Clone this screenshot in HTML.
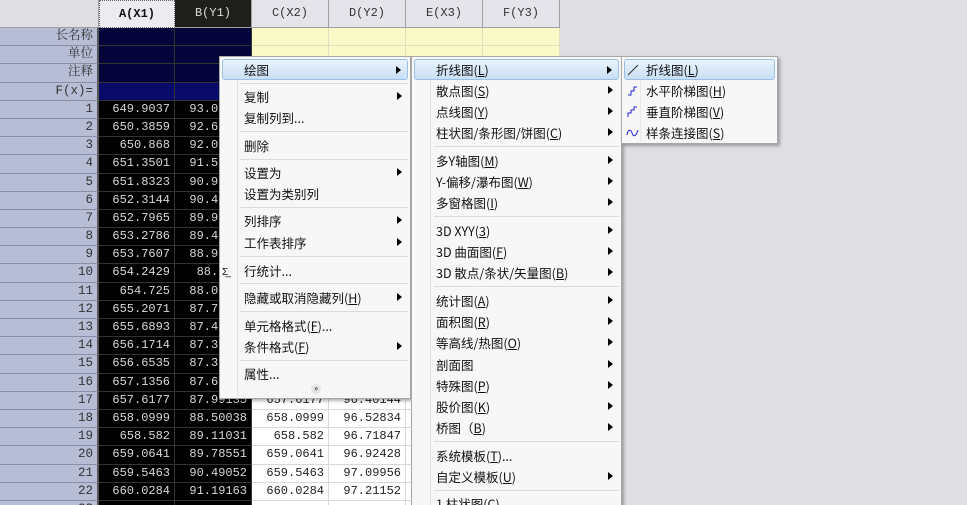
<!DOCTYPE html>
<html><head><meta charset="utf-8"><style>
*{margin:0;padding:0;box-sizing:border-box}
html,body{width:967px;height:505px;overflow:hidden}
body{background:#dfdee3;position:relative;font-family:"Liberation Mono","Noto Serif CJK SC",monospace}
#grid{position:absolute;left:0;top:0;width:560px}
.hdr{height:28px;display:flex;background:#dfdee3}
.hdr div{border-right:1px solid #a0a0a0;border-bottom:1px solid #a0a0a0;text-align:center;line-height:27px;font-size:12px;color:#333;font-family:"Liberation Mono","Noto Serif CJK SC",monospace;background:#e4e4ea}
.hdr .c0{background:#dfdee3}
.hdr .sa{background:#ececf0;font-weight:bold;color:#111;border:1px dotted #666}
.hdr .sb{background:#1e1e1a;color:#ddd}
.r{height:18.2px;display:flex;overflow:hidden}
.r div{height:18.2px;border-right:1px solid #c8c8c8;border-bottom:1px solid #c8c8c8;text-align:right;padding-right:4px;font-size:12px;line-height:17px;white-space:nowrap;overflow:hidden;color:#222}
.r .h{background:#b8bdd6;border-right:2px solid #555;border-bottom:1px solid #8a8fa8;color:#333;font-family:"Liberation Mono","Noto Serif CJK SC",monospace;font-size:12.5px}
.w0{width:99px}.w1{width:76px}.w2{width:77px}
.r .n{background:#04043a;border-color:#333}
.r .k{background:#000;color:#d8d8d8;border-color:#333}
.r .y{background:#fafac8;border-color:#e0e0c0}
.r .wh{background:#fff;border-color:#d8d8d8}
.menu{position:absolute;background:#f7f7f7;border:1px solid #a8a8a8;box-shadow:2px 2px 3px rgba(0,0,0,.3);font-family:"Noto Sans CJK SC","Liberation Sans",sans-serif;font-size:12.5px;color:#111}
.menu .gut{position:absolute;top:2px;bottom:2px;width:1px;background:#e2e2e2}
.it{position:absolute;left:2px;right:2px;height:21px;line-height:21px}
.it.hl{background:linear-gradient(#eaf3fc,#c8dff5);border:1px solid #9cc0e6;border-radius:3px;line-height:19px}
.it .arr{position:absolute;right:6px;top:6px;width:0;height:0;border-left:5px solid #000;border-top:4.5px solid transparent;border-bottom:4.5px solid transparent}
.sep{position:absolute;height:1px;background:#dcdcdc}
</style></head><body>
<div id="grid">
<div class="hdr"><div class="c0" style="width:99px"></div><div class="sa" style="width:76px">A(X1)</div><div class="sb" style="width:77px">B(Y1)</div><div style="width:77px">C(X2)</div><div style="width:77px">D(Y2)</div><div style="width:77px">E(X3)</div><div style="width:77px">F(Y3)</div></div>
<div class="r"><div class="h w0">长名称</div><div class="n w1"></div><div class="n w2"></div><div class="y w2"></div><div class="y w2"></div><div class="y w2"></div><div class="y w2"></div></div>
<div class="r"><div class="h w0">单位</div><div class="n w1"></div><div class="n w2"></div><div class="y w2"></div><div class="y w2"></div><div class="y w2"></div><div class="y w2"></div></div>
<div class="r"><div class="h w0">注释</div><div class="n w1"></div><div class="n w2"></div><div class="y w2"></div><div class="y w2"></div><div class="y w2"></div><div class="y w2"></div></div>
<div class="r"><div class="h w0">F(x)=</div><div class="n w1" style="background:#0a0a6a"></div><div class="n w2" style="background:#0a0a6a"></div><div class="wh w2"></div><div class="wh w2"></div><div class="wh w2"></div><div class="wh w2"></div></div>
<div class="r"><div class="h w0">1</div><div class="k w1">649.9037</div><div class="k w2">93.01234</div><div class="wh w2"></div><div class="wh w2"></div><div class="wh w2"></div><div class="wh w2"></div></div>
<div class="r"><div class="h w0">2</div><div class="k w1">650.3859</div><div class="k w2">92.61234</div><div class="wh w2"></div><div class="wh w2"></div><div class="wh w2"></div><div class="wh w2"></div></div>
<div class="r"><div class="h w0">3</div><div class="k w1">650.868</div><div class="k w2">92.01234</div><div class="wh w2"></div><div class="wh w2"></div><div class="wh w2"></div><div class="wh w2"></div></div>
<div class="r"><div class="h w0">4</div><div class="k w1">651.3501</div><div class="k w2">91.51234</div><div class="wh w2"></div><div class="wh w2"></div><div class="wh w2"></div><div class="wh w2"></div></div>
<div class="r"><div class="h w0">5</div><div class="k w1">651.8323</div><div class="k w2">90.91234</div><div class="wh w2"></div><div class="wh w2"></div><div class="wh w2"></div><div class="wh w2"></div></div>
<div class="r"><div class="h w0">6</div><div class="k w1">652.3144</div><div class="k w2">90.41234</div><div class="wh w2"></div><div class="wh w2"></div><div class="wh w2"></div><div class="wh w2"></div></div>
<div class="r"><div class="h w0">7</div><div class="k w1">652.7965</div><div class="k w2">89.91234</div><div class="wh w2"></div><div class="wh w2"></div><div class="wh w2"></div><div class="wh w2"></div></div>
<div class="r"><div class="h w0">8</div><div class="k w1">653.2786</div><div class="k w2">89.41234</div><div class="wh w2"></div><div class="wh w2"></div><div class="wh w2"></div><div class="wh w2"></div></div>
<div class="r"><div class="h w0">9</div><div class="k w1">653.7607</div><div class="k w2">88.91234</div><div class="wh w2"></div><div class="wh w2"></div><div class="wh w2"></div><div class="wh w2"></div></div>
<div class="r"><div class="h w0">10</div><div class="k w1">654.2429</div><div class="k w2">&nbsp;88.1234</div><div class="wh w2"></div><div class="wh w2"></div><div class="wh w2"></div><div class="wh w2"></div></div>
<div class="r"><div class="h w0">11</div><div class="k w1">654.725</div><div class="k w2">88.01234</div><div class="wh w2"></div><div class="wh w2"></div><div class="wh w2"></div><div class="wh w2"></div></div>
<div class="r"><div class="h w0">12</div><div class="k w1">655.2071</div><div class="k w2">87.71234</div><div class="wh w2"></div><div class="wh w2"></div><div class="wh w2"></div><div class="wh w2"></div></div>
<div class="r"><div class="h w0">13</div><div class="k w1">655.6893</div><div class="k w2">87.41234</div><div class="wh w2"></div><div class="wh w2"></div><div class="wh w2"></div><div class="wh w2"></div></div>
<div class="r"><div class="h w0">14</div><div class="k w1">656.1714</div><div class="k w2">87.31234</div><div class="wh w2"></div><div class="wh w2"></div><div class="wh w2"></div><div class="wh w2"></div></div>
<div class="r"><div class="h w0">15</div><div class="k w1">656.6535</div><div class="k w2">87.31234</div><div class="wh w2"></div><div class="wh w2"></div><div class="wh w2"></div><div class="wh w2"></div></div>
<div class="r"><div class="h w0">16</div><div class="k w1">657.1356</div><div class="k w2">87.61234</div><div class="wh w2"></div><div class="wh w2"></div><div class="wh w2"></div><div class="wh w2"></div></div>
<div class="r"><div class="h w0">17</div><div class="k w1">657.6177</div><div class="k w2">87.99135</div><div class="wh w2">657.6177</div><div class="wh w2">96.40144</div><div class="wh w2"></div><div class="wh w2"></div></div>
<div class="r"><div class="h w0">18</div><div class="k w1">658.0999</div><div class="k w2">88.50038</div><div class="wh w2">658.0999</div><div class="wh w2">96.52834</div><div class="wh w2"></div><div class="wh w2"></div></div>
<div class="r"><div class="h w0">19</div><div class="k w1">658.582</div><div class="k w2">89.11031</div><div class="wh w2">658.582</div><div class="wh w2">96.71847</div><div class="wh w2"></div><div class="wh w2"></div></div>
<div class="r"><div class="h w0">20</div><div class="k w1">659.0641</div><div class="k w2">89.78551</div><div class="wh w2">659.0641</div><div class="wh w2">96.92428</div><div class="wh w2"></div><div class="wh w2"></div></div>
<div class="r"><div class="h w0">21</div><div class="k w1">659.5463</div><div class="k w2">90.49052</div><div class="wh w2">659.5463</div><div class="wh w2">97.09956</div><div class="wh w2"></div><div class="wh w2"></div></div>
<div class="r"><div class="h w0">22</div><div class="k w1">660.0284</div><div class="k w2">91.19163</div><div class="wh w2">660.0284</div><div class="wh w2">97.21152</div><div class="wh w2"></div><div class="wh w2"></div></div>
<div class="r"><div class="h w0">23</div><div class="k w1"></div><div class="k w2"></div><div class="wh w2"></div><div class="wh w2"></div><div class="wh w2"></div><div class="wh w2"></div></div>
</div>

<!-- menu 1 -->
<div class="menu" style="left:219px;top:56px;width:192px;height:343px">
<div class="gut" style="left:17px"></div>
<div class="it hl" style="top:2px"><span style="position:absolute;left:21px">绘图</span><i class="arr"></i></div>
<div class="sep" style="left:20px;right:2px;top:26px"></div>
<div class="it" style="top:29px"><span style="position:absolute;left:22px">复制</span><i class="arr"></i></div>
<div class="it" style="top:50px"><span style="position:absolute;left:22px">复制列到...</span></div>
<div class="sep" style="left:20px;right:2px;top:74px"></div>
<div class="it" style="top:78px"><span style="position:absolute;left:22px">删除</span></div>
<div class="sep" style="left:20px;right:2px;top:102px"></div>
<div class="it" style="top:105px"><span style="position:absolute;left:22px">设置为</span><i class="arr"></i></div>
<div class="it" style="top:126px"><span style="position:absolute;left:22px">设置为类别列</span></div>
<div class="sep" style="left:20px;right:2px;top:150px"></div>
<div class="it" style="top:153px"><span style="position:absolute;left:22px">列排序</span><i class="arr"></i></div>
<div class="it" style="top:175px"><span style="position:absolute;left:22px">工作表排序</span><i class="arr"></i></div>
<div class="sep" style="left:20px;right:2px;top:199px"></div>
<div class="it" style="top:203px"><span style="position:absolute;left:0px;font-size:10px">Σ̲</span><span style="position:absolute;left:22px">行统计...</span></div>
<div class="sep" style="left:20px;right:2px;top:226px"></div>
<div class="it" style="top:230px"><span style="position:absolute;left:22px">隐藏或取消隐藏列(<u>H</u>)</span><i class="arr"></i></div>
<div class="sep" style="left:20px;right:2px;top:254px"></div>
<div class="it" style="top:258px"><span style="position:absolute;left:22px">单元格格式(<u>F</u>)...</span></div>
<div class="it" style="top:279px"><span style="position:absolute;left:22px">条件格式(<u>F</u>)</span><i class="arr"></i></div>
<div class="sep" style="left:20px;right:2px;top:303px"></div>
<div class="it" style="top:306px"><span style="position:absolute;left:22px">属性...</span></div>
<div style="position:absolute;left:91px;top:327px;width:10px;height:10px;border-radius:5px;background:#e4e4e4;font-size:8px;line-height:10px;text-align:center">»</div>
</div>

<!-- menu 2 -->
<div class="menu" style="left:411px;top:56px;width:211px;height:460px">
<div class="gut" style="left:18px"></div>
<div class="it hl" style="top:2px"><span style="position:absolute;left:21px">折线图(<u>L</u>)</span><i class="arr"></i></div>
<div class="it" style="top:23px"><span style="position:absolute;left:22px">散点图(<u>S</u>)</span><i class="arr"></i></div>
<div class="it" style="top:44px"><span style="position:absolute;left:22px">点线图(<u>Y</u>)</span><i class="arr"></i></div>
<div class="it" style="top:65px"><span style="position:absolute;left:22px">柱状图/条形图/饼图(<u>C</u>)</span><i class="arr"></i></div>
<div class="sep" style="left:22px;right:2px;top:89px"></div>
<div class="it" style="top:93px"><span style="position:absolute;left:22px">多Y轴图(<u>M</u>)</span><i class="arr"></i></div>
<div class="it" style="top:114px"><span style="position:absolute;left:22px">Y-偏移/瀑布图(<u>W</u>)</span><i class="arr"></i></div>
<div class="it" style="top:135px"><span style="position:absolute;left:22px">多窗格图(<u>I</u>)</span><i class="arr"></i></div>
<div class="sep" style="left:22px;right:2px;top:159px"></div>
<div class="it" style="top:163px"><span style="position:absolute;left:22px">3D XYY(<u>3</u>)</span><i class="arr"></i></div>
<div class="it" style="top:184px"><span style="position:absolute;left:22px">3D 曲面图(<u>F</u>)</span><i class="arr"></i></div>
<div class="it" style="top:205px"><span style="position:absolute;left:22px">3D 散点/条状/矢量图(<u>B</u>)</span><i class="arr"></i></div>
<div class="sep" style="left:22px;right:2px;top:229px"></div>
<div class="it" style="top:233px"><span style="position:absolute;left:22px">统计图(<u>A</u>)</span><i class="arr"></i></div>
<div class="it" style="top:254px"><span style="position:absolute;left:22px">面积图(<u>R</u>)</span><i class="arr"></i></div>
<div class="it" style="top:275px"><span style="position:absolute;left:22px">等高线/热图(<u>O</u>)</span><i class="arr"></i></div>
<div class="it" style="top:297px"><span style="position:absolute;left:22px">剖面图</span><i class="arr"></i></div>
<div class="it" style="top:318px"><span style="position:absolute;left:22px">特殊图(<u>P</u>)</span><i class="arr"></i></div>
<div class="it" style="top:339px"><span style="position:absolute;left:22px">股价图(<u>K</u>)</span><i class="arr"></i></div>
<div class="it" style="top:360px"><span style="position:absolute;left:22px">桥图（<u>B</u>)</span><i class="arr"></i></div>
<div class="sep" style="left:22px;right:2px;top:384px"></div>
<div class="it" style="top:388px"><span style="position:absolute;left:22px">系统模板(<u>T</u>)...</span></div>
<div class="it" style="top:409px"><span style="position:absolute;left:22px">自定义模板(<u>U</u>)</span><i class="arr"></i></div>
<div class="sep" style="left:22px;right:2px;top:433px"></div>
<div class="it" style="top:436px"><span style="position:absolute;left:22px">1 柱状图(<u>C</u>)</span></div>
</div>

<!-- menu 3 -->
<div class="menu" style="left:621px;top:56px;width:157px;height:88px">
<div class="gut" style="left:18px;background:#e8e8e8;width:1px"></div>
<div class="it hl" style="top:2px"><svg style="position:absolute;left:2px;top:4px" width="12" height="12"><path d="M1 11 L11 1" stroke="#333" stroke-width="1"/></svg><span style="position:absolute;left:21px">折线图(<u>L</u>)</span></div>
<div class="it" style="top:23px"><svg style="position:absolute;left:3px;top:5px" width="12" height="12"><path d="M1 10 H4 V6 H7 V2 H10" stroke="#2020d0" fill="none"/></svg><span style="position:absolute;left:22px">水平阶梯图(<u>H</u>)</span></div>
<div class="it" style="top:44px"><svg style="position:absolute;left:3px;top:5px" width="12" height="12"><path d="M1 11 V7 H4 V4 H7 V1 H10" stroke="#2020d0" fill="none"/></svg><span style="position:absolute;left:22px">垂直阶梯图(<u>V</u>)</span></div>
<div class="it" style="top:65px"><svg style="position:absolute;left:2px;top:5px" width="14" height="12"><path d="M1 8 C2 2 5 2 6 6 C7 10 10 10 12 3" stroke="#2020d0" fill="none"/></svg><span style="position:absolute;left:22px">样条连接图(<u>S</u>)</span></div>
</div>
</body></html>
